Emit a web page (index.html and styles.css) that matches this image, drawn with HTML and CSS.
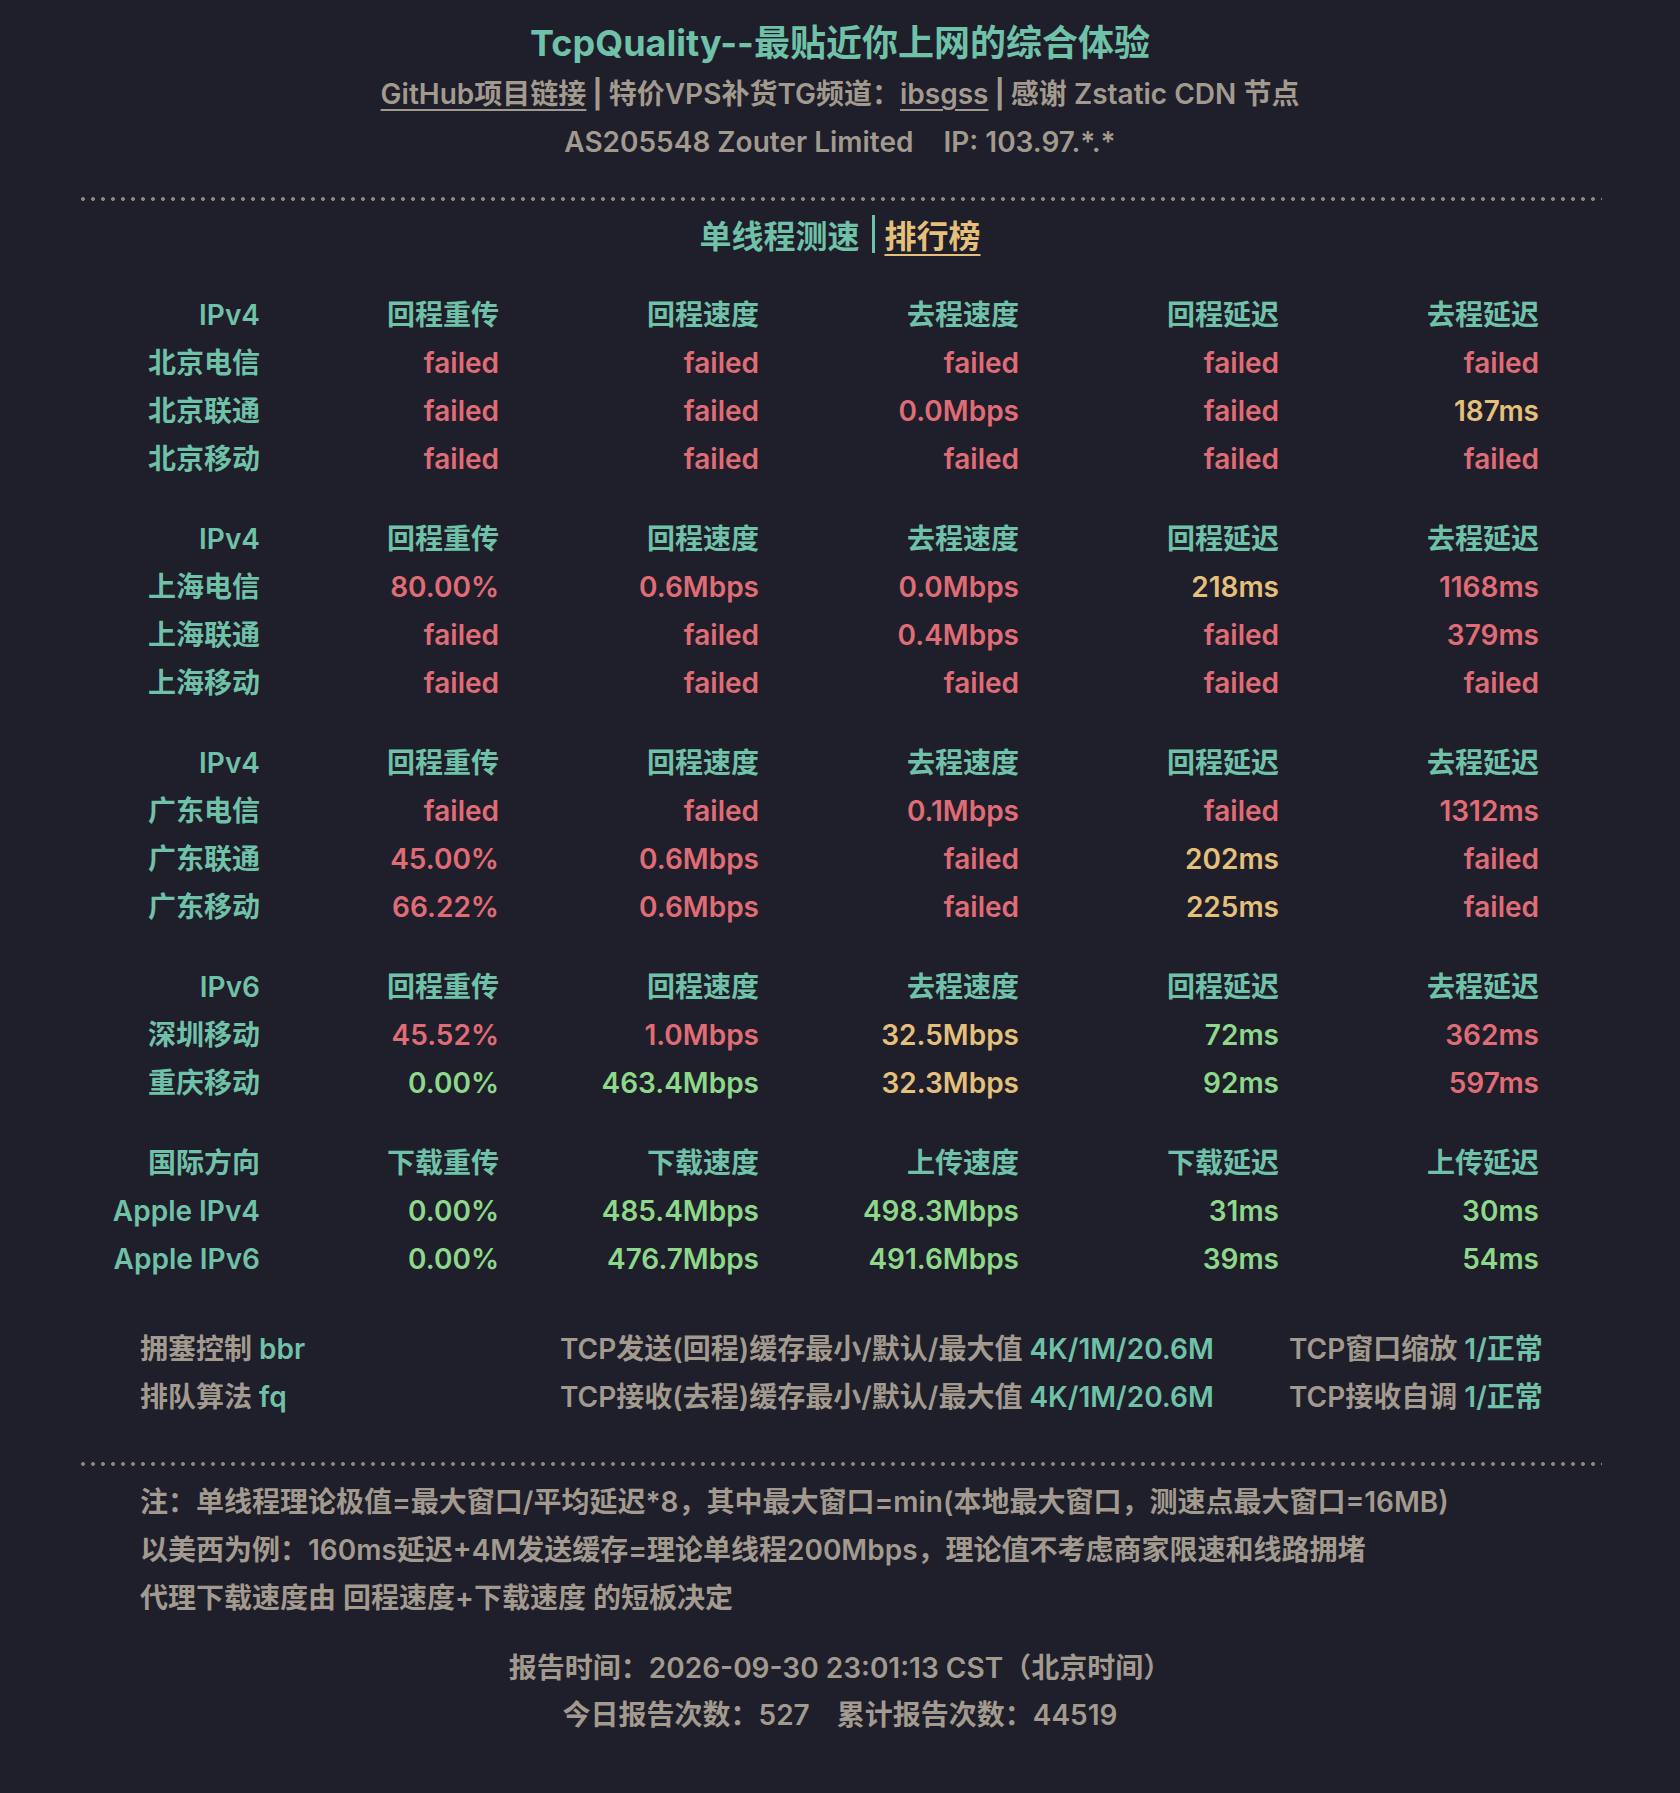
FILE: index.html
```html
<!DOCTYPE html>
<html lang="zh-CN">
<head>
<meta charset="utf-8">
<title>TcpQuality</title>
<link rel="stylesheet" href="styles.css">
</head>
<body>
<div class="page">
  <header class="head">
    <h1 class="title">TcpQuality--最贴近你上网的综合体验</h1>
    <div class="sub"><a class="link" href="#">GitHub项目链接</a><span class="bar">|</span>特价VPS补货TG频道：<a class="link" href="#">ibsgss</a><span class="bar">|</span>感谢 Zstatic CDN 节点</div>
    <div class="asn">AS205548 Zouter Limited<span class="ip">IP: 103.97.*.*</span></div>
  </header>

  <div class="dots"></div>

  <nav class="tabs"><span class="tab-active">单线程测速</span><span class="tab-sep"></span><a class="tab-link" href="#">排行榜</a></nav>

  <section class="grp">
    <div class="th">IPv4</div><div class="th">回程重传</div><div class="th">回程速度</div><div class="th">去程速度</div><div class="th">回程延迟</div><div class="th">去程延迟</div>
    <div class="th">北京电信</div><div class="r">failed</div><div class="r">failed</div><div class="r">failed</div><div class="r">failed</div><div class="r">failed</div>
    <div class="th">北京联通</div><div class="r">failed</div><div class="r">failed</div><div class="r">0.0Mbps</div><div class="r">failed</div><div class="y">187ms</div>
    <div class="th">北京移动</div><div class="r">failed</div><div class="r">failed</div><div class="r">failed</div><div class="r">failed</div><div class="r">failed</div>
  </section>

  <section class="grp">
    <div class="th">IPv4</div><div class="th">回程重传</div><div class="th">回程速度</div><div class="th">去程速度</div><div class="th">回程延迟</div><div class="th">去程延迟</div>
    <div class="th">上海电信</div><div class="r">80.00%</div><div class="r">0.6Mbps</div><div class="r">0.0Mbps</div><div class="y">218ms</div><div class="r">1168ms</div>
    <div class="th">上海联通</div><div class="r">failed</div><div class="r">failed</div><div class="r">0.4Mbps</div><div class="r">failed</div><div class="r">379ms</div>
    <div class="th">上海移动</div><div class="r">failed</div><div class="r">failed</div><div class="r">failed</div><div class="r">failed</div><div class="r">failed</div>
  </section>

  <section class="grp">
    <div class="th">IPv4</div><div class="th">回程重传</div><div class="th">回程速度</div><div class="th">去程速度</div><div class="th">回程延迟</div><div class="th">去程延迟</div>
    <div class="th">广东电信</div><div class="r">failed</div><div class="r">failed</div><div class="r">0.1Mbps</div><div class="r">failed</div><div class="r">1312ms</div>
    <div class="th">广东联通</div><div class="r">45.00%</div><div class="r">0.6Mbps</div><div class="r">failed</div><div class="y">202ms</div><div class="r">failed</div>
    <div class="th">广东移动</div><div class="r">66.22%</div><div class="r">0.6Mbps</div><div class="r">failed</div><div class="y">225ms</div><div class="r">failed</div>
  </section>

  <section class="grp">
    <div class="th">IPv6</div><div class="th">回程重传</div><div class="th">回程速度</div><div class="th">去程速度</div><div class="th">回程延迟</div><div class="th">去程延迟</div>
    <div class="th">深圳移动</div><div class="r">45.52%</div><div class="r">1.0Mbps</div><div class="y">32.5Mbps</div><div class="g">72ms</div><div class="r">362ms</div>
    <div class="th">重庆移动</div><div class="g">0.00%</div><div class="g">463.4Mbps</div><div class="y">32.3Mbps</div><div class="g">92ms</div><div class="r">597ms</div>
  </section>

  <section class="grp">
    <div class="th">国际方向</div><div class="th">下载重传</div><div class="th">下载速度</div><div class="th">上传速度</div><div class="th">下载延迟</div><div class="th">上传延迟</div>
    <div class="th">Apple IPv4</div><div class="g">0.00%</div><div class="g">485.4Mbps</div><div class="g">498.3Mbps</div><div class="g">31ms</div><div class="g">30ms</div>
    <div class="th">Apple IPv6</div><div class="g">0.00%</div><div class="g">476.7Mbps</div><div class="g">491.6Mbps</div><div class="g">39ms</div><div class="g">54ms</div>
  </section>

  <section class="cfg">
    <div>拥塞控制 <span class="v">bbr</span></div>
    <div>TCP发送(回程)缓存最小/默认/最大值 <span class="v">4K/1M/20.6M</span></div>
    <div>TCP窗口缩放 <span class="v">1/正常</span></div>
    <div>排队算法 <span class="v">fq</span></div>
    <div>TCP接收(去程)缓存最小/默认/最大值 <span class="v">4K/1M/20.6M</span></div>
    <div>TCP接收自调 <span class="v">1/正常</span></div>
  </section>

  <div class="dots dots-2"></div>

  <section class="notes">
    <p>注：单线程理论极值=最大窗口/平均延迟*8，其中最大窗口=min(本地最大窗口，测速点最大窗口=16MB)</p>
    <p>以美西为例：160ms延迟+4M发送缓存=理论单线程200Mbps，理论值不考虑商家限速和线路拥堵</p>
    <p>代理下载速度由 回程速度+下载速度 的短板决定</p>
  </section>

  <footer class="foot">
    <p>报告时间：2026-09-30 23:01:13 CST（北京时间）</p>
    <p>今日报告次数：527<span class="gap"></span>累计报告次数：44519</p>
  </footer>
</div>
</body>
</html>
```

FILE: styles.css
```css
html {
  background: #1f1e2b;
}
body {
  margin: 0;
  background: #1f1e2b;
  color: #a29a8e;
  font-family: "Inter", "Noto Sans CJK SC", sans-serif;
  font-weight: 600;
  font-size: 28px;
}
.page {
  width: 1524px;
  margin: 0 auto;
  padding-top: 18px;
  padding-bottom: 56px;
}
.head {
  text-align: center;
}
.title {
  margin: 0;
  font-size: 36px;
  line-height: 50px;
  font-weight: 700;
  color: #6fc1a8;
}
.sub {
  margin-top: 2px;
  line-height: 49px;
}
.link {
  color: #a29a8e;
  text-decoration: underline;
  text-underline-offset: 5px;
  text-decoration-thickness: 2px;
}
.bar {
  display: inline-block;
  margin: 0 6px;
  font-weight: 700;
}
.asn {
  line-height: 47px;
}
.ip {
  margin-left: 30px;
}
.dots {
  margin-top: 31px;
  height: 4px;
  background-image: radial-gradient(circle, #8b847a 1.7px, transparent 2.2px);
  background-size: 10px 4px;
  background-repeat: repeat-x;
}
.tabs {
  margin-top: 9px;
  display: flex;
  justify-content: center;
  align-items: center;
  height: 48px;
  font-size: 32px;
  color: #6fc1a8;
}
.tab-sep {
  width: 3px;
  height: 38px;
  background: #6fc1a8;
  margin: 0 10px 0 12px;
}
.tab-link {
  color: #e5c07b;
  text-decoration: underline;
  text-underline-offset: 6px;
  text-decoration-thickness: 2px;
}
.grp {
  display: grid;
  grid-template-columns: 182px 239px 260px 260px 260px 260px;
  grid-auto-rows: 48px;
  line-height: 48px;
  text-align: right;
  white-space: nowrap;
  margin-top: 32px;
}
.tabs + .grp {
  margin-top: 33px;
}
.th {
  color: #6fc1a8;
}
.r {
  color: #e06c75;
}
.y {
  color: #e5c07b;
}
.g {
  color: #8ed88a;
}
.cfg {
  display: grid;
  grid-template-columns: 420px 729px auto;
  grid-auto-rows: 48px;
  line-height: 48px;
  padding-left: 62px;
  margin-top: 42px;
  white-space: nowrap;
}
.v {
  color: #6fc1a8;
}
.dots-2 {
  margin-top: 41px;
}
.notes {
  margin-top: 12px;
  padding-left: 62px;
}
.notes p {
  margin: 0;
  line-height: 48px;
  white-space: nowrap;
}
.foot {
  margin-top: 23px;
  text-align: center;
}
.foot p {
  margin: 0;
  line-height: 47px;
}
.gap {
  display: inline-block;
  width: 27px;
}
```
